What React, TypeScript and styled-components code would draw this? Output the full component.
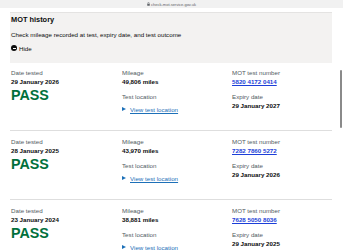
import React from 'react';
import styled, { createGlobalStyle } from 'styled-components';

const GlobalStyle = createGlobalStyle`
  html, body {
    margin: 0;
    padding: 0;
    background: #ffffff;
    overflow: hidden;
  }
  body {
    font-family: "Liberation Sans", Arial, sans-serif;
    color: #0b0c0c;
  }
`;

const TopBar = styled.div`
  height: 8px;
  background: #f1f1f1;
  display: flex;
  align-items: center;
  justify-content: center;
`;

const UrlText = styled.span`
  display: flex;
  align-items: center;
  gap: 1px;
  font-size: 4px;
  line-height: 5px;
  color: #5f6368;
`;

const Page = styled.div`
  padding: 4px 11px 0 10px;
`;

const Panel = styled.div`
  background: #f3f2f1;
  border-top: 1px solid #e4e3e2;
  padding: 2px 1px 10px;
`;

const Title = styled.h2`
  margin: 0;
  font-size: 7.4px;
  line-height: 10px;
  font-weight: 700;
`;

const Description = styled.p`
  margin: 4.5px 0 0;
  font-size: 6.2px;
  line-height: 9px;
`;

const HideToggle = styled.div`
  margin-top: 5px;
  display: flex;
  align-items: center;
  gap: 2px;
  font-size: 6.2px;
  line-height: 9px;
`;

const ToggleIcon = styled.span`
  width: 6px;
  height: 6px;
  border-radius: 50%;
  background: #0b0c0c;
  display: flex;
  align-items: center;
  justify-content: center;

  &::after {
    content: '';
    width: 3px;
    height: 1px;
    background: #ffffff;
  }
`;

const Records = styled.div`
  padding-left: 1px;
`;

const Record = styled.div<{ $first?: boolean }>`
  display: grid;
  grid-template-columns: 111px 110px 1fr;
  align-items: start;
  padding: ${(p) => (p.$first ? '5px' : '6px')} 0 16px;
  border-top: ${(p) => (p.$first ? 'none' : '1px solid #dedede')};
  margin-left: -1px;
  padding-left: 1px;
`;

const Column = styled.div`
  display: flex;
  flex-direction: column;
`;

const Label = styled.span<{ $spaced?: boolean }>`
  font-size: 6.2px;
  line-height: 9px;
  color: #505a5f;
  margin-top: ${(p) => (p.$spaced ? '6px' : '0')};
`;

const Value = styled.span`
  font-size: 6.2px;
  line-height: 9px;
  font-weight: 700;
`;

const Result = styled.span`
  margin-top: 1px;
  font-size: 14.3px;
  line-height: 16px;
  font-weight: 700;
  color: #00703c;
`;

const TestNumber = styled.a`
  font-size: 6.2px;
  line-height: 9px;
  font-weight: 700;
  color: #1c3fd8;
  text-decoration: underline;
  text-decoration-thickness: 0.6px;
  text-underline-offset: 0.8px;
`;

const LocationLink = styled.a`
  margin-top: 4px;
  display: flex;
  align-items: center;
  gap: 4px;
  font-size: 6.2px;
  line-height: 9px;
  color: #1d70b8;

  span {
    text-decoration: underline;
    text-decoration-thickness: 0.5px;
    text-underline-offset: 0.8px;
  }
`;

const Triangle = styled.i`
  width: 0;
  height: 0;
  border-left: 4px solid #1d70b8;
  border-top: 2px solid transparent;
  border-bottom: 2px solid transparent;
`;

const ScrollThumb = styled.div`
  position: absolute;
  left: 340px;
  top: 70px;
  width: 2px;
  height: 58px;
  border-radius: 1px;
  background: #8a8a8a;
`;

interface MotTest {
  date: string;
  mileage: string;
  number: string;
  expiry: string;
}

const tests: MotTest[] = [
  { date: '29 January 2026', mileage: '49,806 miles', number: '5820 4172 0414', expiry: '29 January 2027' },
  { date: '28 January 2025', mileage: '43,970 miles', number: '7282 7860 5272', expiry: '29 January 2026' },
  { date: '23 January 2024', mileage: '38,881 miles', number: '7628 5050 8036', expiry: '29 January 2025' },
];

const LockIcon = () => (
  <svg width="3" height="4" viewBox="0 0 6 8">
    <path d="M1.5 3.5V2.3a1.5 1.5 0 0 1 3 0v1.2" fill="none" stroke="#5f6368" strokeWidth="1" />
    <rect x="0.5" y="3.5" width="5" height="4" rx="0.6" fill="#5f6368" />
  </svg>
);

export const App: React.FC = () => {
  return (
    <>
      <GlobalStyle />
      <TopBar>
        <UrlText>
          <LockIcon />
          check-mot.service.gov.uk
        </UrlText>
      </TopBar>
      <Page>
        <Panel>
          <Title>MOT history</Title>
          <Description>Check mileage recorded at test, expiry date, and test outcome</Description>
          <HideToggle>
            <ToggleIcon />
            Hide
          </HideToggle>
        </Panel>
        <Records>
          {tests.map((t, i) => (
            <Record key={t.number} $first={i === 0}>
              <Column>
                <Label>Date tested</Label>
                <Value>{t.date}</Value>
                <Result>PASS</Result>
              </Column>
              <Column>
                <Label>Mileage</Label>
                <Value>{t.mileage}</Value>
                <Label $spaced>Test location</Label>
                <LocationLink href="#">
                  <Triangle />
                  <span>View test location</span>
                </LocationLink>
              </Column>
              <Column>
                <Label>MOT test number</Label>
                <TestNumber href="#">{t.number}</TestNumber>
                <Label $spaced>Expiry date</Label>
                <Value>{t.expiry}</Value>
              </Column>
            </Record>
          ))}
        </Records>
      </Page>
      <ScrollThumb />
    </>
  );
};

export default App;
